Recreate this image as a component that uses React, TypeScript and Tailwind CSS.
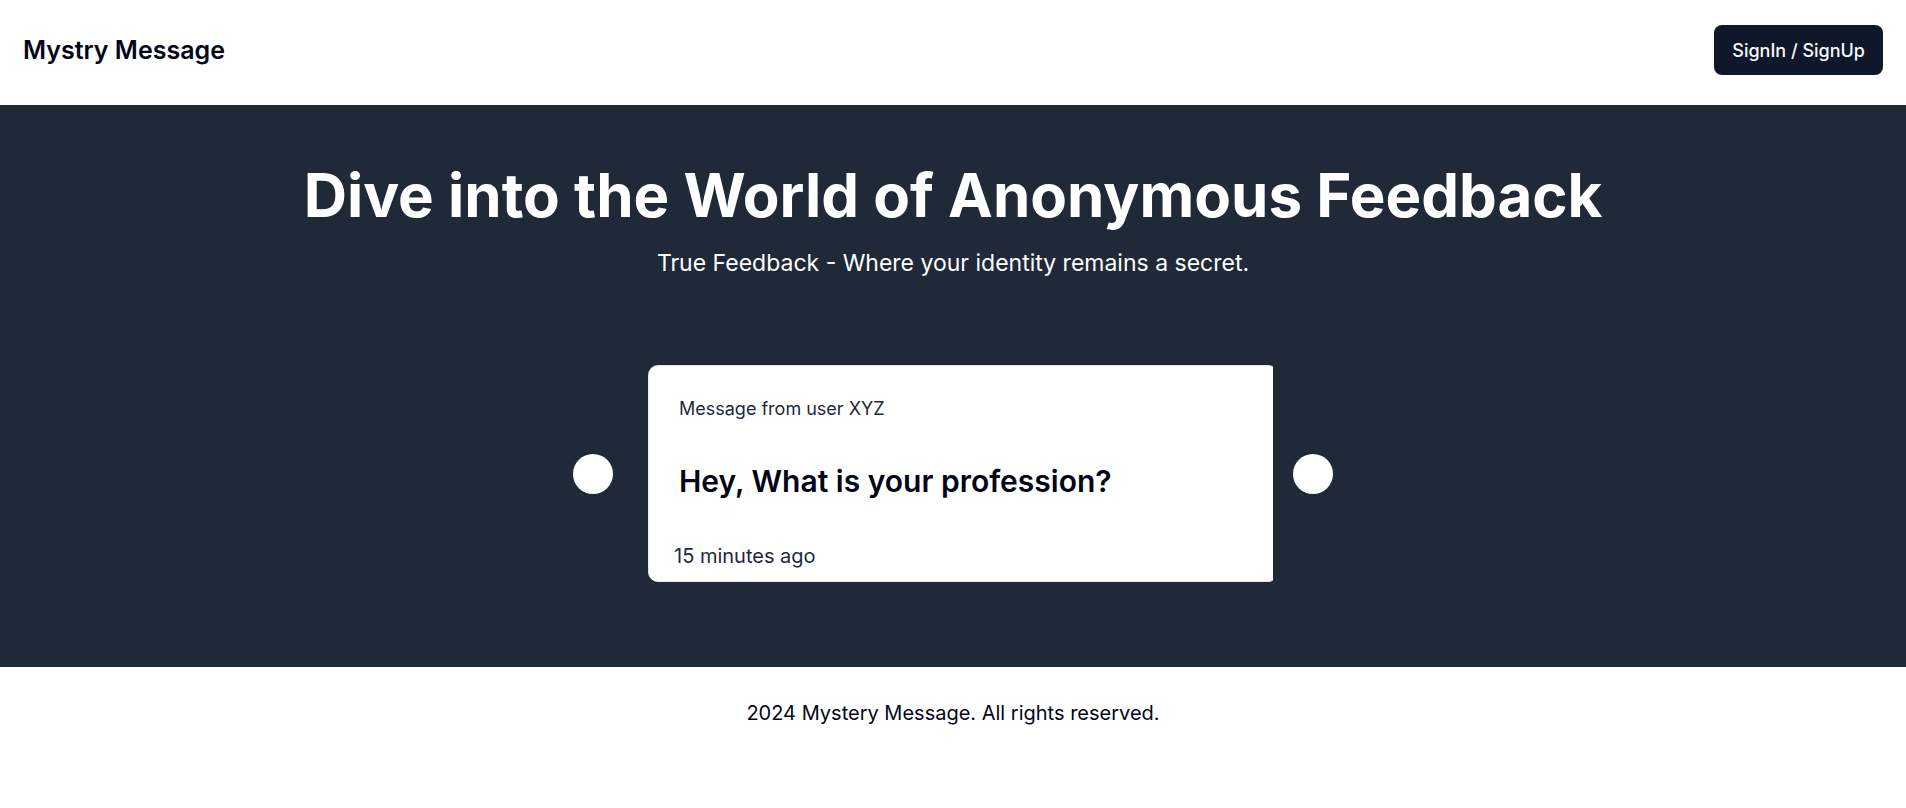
export default function App() {
  return (
    <div className="bg-white font-['Inter',sans-serif] text-slate-950">
      <nav className="flex items-center justify-between px-[23px] pt-[25px] pb-[30px]">
        <a href="#" className="text-[25px] leading-8 font-semibold">Mystry Message</a>
        <button className="h-[50px] rounded-lg bg-[#0f172a] px-[18px] text-[18px] font-medium text-slate-50">SignIn / SignUp</button>
      </nav>
      <main className="flex flex-col items-center bg-[#1f2937] pt-[60px] pb-[85px] text-white">
        <section className="text-center">
          <h1 className="text-6xl font-bold">Dive into the World of Anonymous Feedback</h1>
          <p className="mt-[22px] text-[23px] leading-8">True Feedback - Where your identity remains a secret.</p>
        </section>
        <section className="mt-[86px] flex items-center gap-5">
          <button aria-label="Previous slide" className="size-10 rounded-full bg-white" />
          <div className="ml-[15px] w-[625px] overflow-hidden">
            <article className="w-[630px] rounded-[10px] border border-slate-200 bg-white pt-[30px] pb-[11px] text-slate-950">
              <h2 className="px-[30px] text-[18px] leading-[26px] text-slate-800">Message from user XYZ</h2>
              <p className="mt-10 px-[30px] text-[30px] leading-[38px] font-semibold">Hey, What is your profession?</p>
              <p className="mt-[42px] px-[25px] text-xl text-slate-800">15 minutes ago</p>
            </article>
          </div>
          <button aria-label="Next slide" className="size-10 rounded-full bg-white" />
        </section>
      </main>
      <footer className="p-8 text-center text-xl">2024 Mystery Message. All rights reserved.</footer>
    </div>
  );
}
